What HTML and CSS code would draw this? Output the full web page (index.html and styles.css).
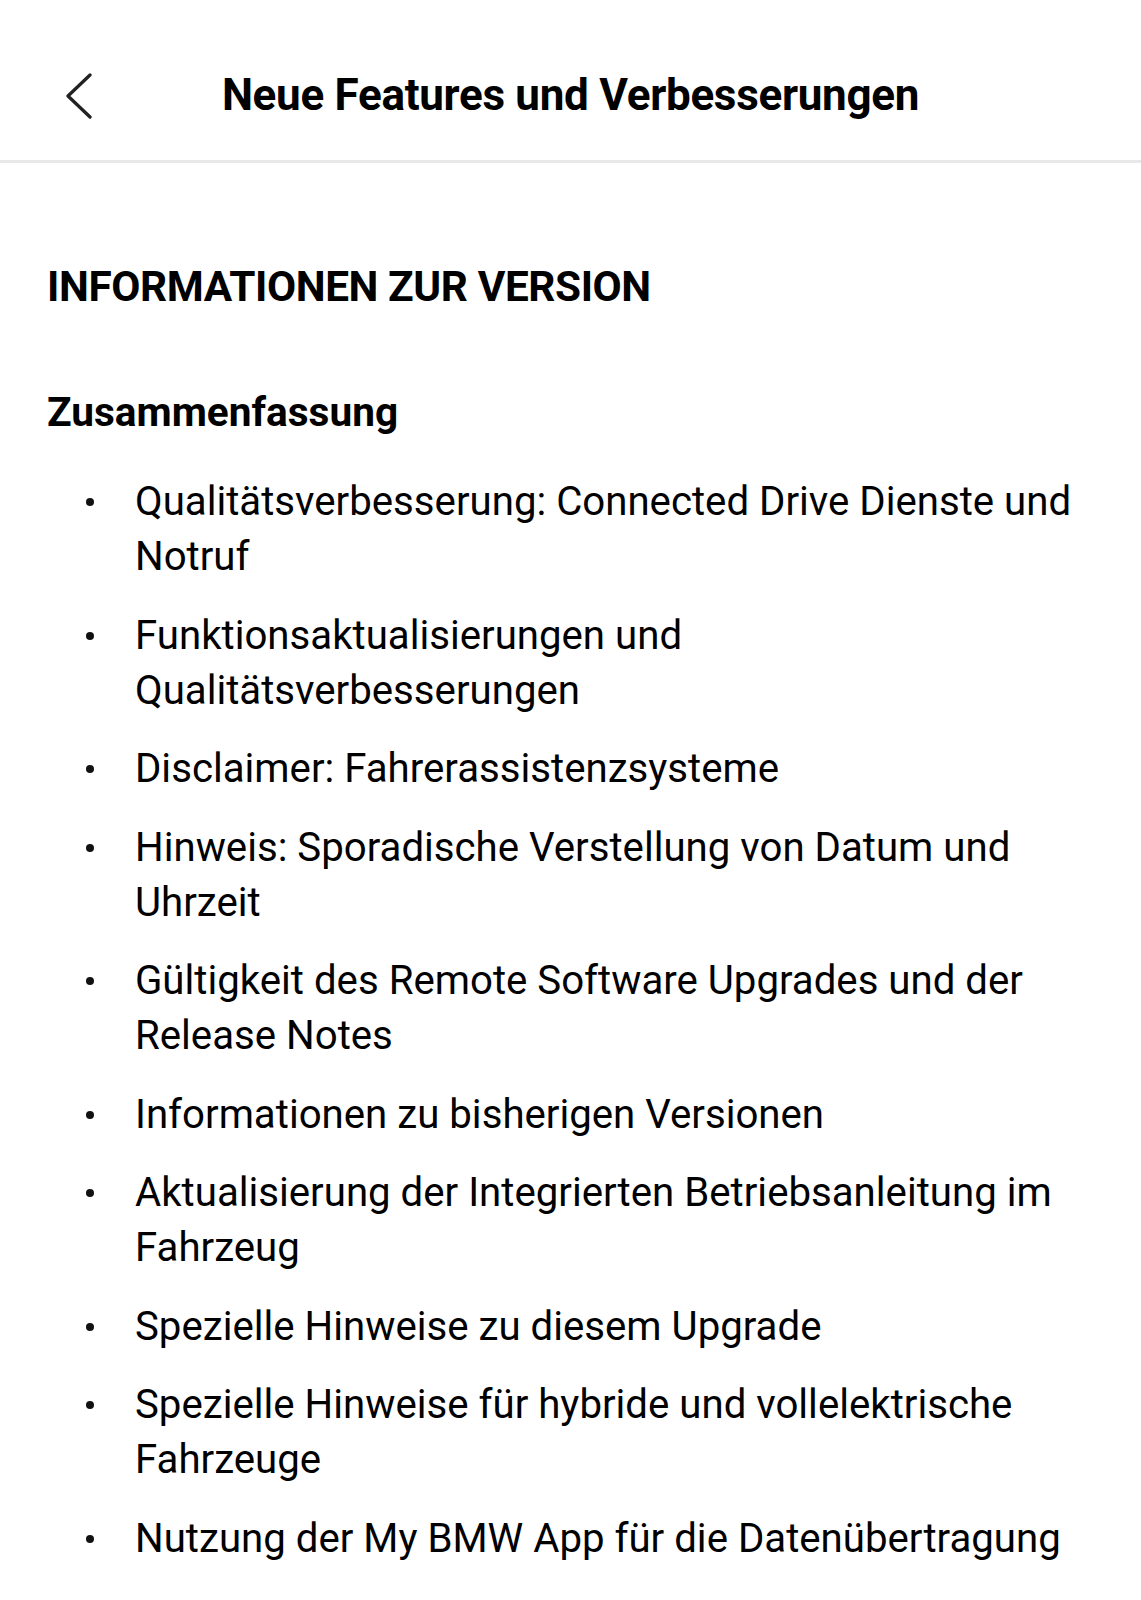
FILE: index.html
```html
<!DOCTYPE html>
<html lang="de">

<head>
    <meta charset="UTF-8">
    <meta name="viewport" content="width=device-width, initial-scale=1.0">
    <title>Neue Features und Verbesserungen</title>
    <link rel="stylesheet" href="styles.css">
</head>

<body>
    <header class="topbar">
        <a class="back" href="#" aria-label="Zurück">
            <svg width="28" height="46" viewBox="0 0 28 46">
                <polyline points="25,2 3,23 25,44" fill="none" stroke="#222" stroke-width="3.3" stroke-linecap="round" stroke-linejoin="round" />
            </svg>
        </a>
        <h1 class="title">Neue Features und Verbesserungen</h1>
        <span></span>
    </header>

    <main class="content">
        <h2 class="section-title">INFORMATIONEN ZUR VERSION</h2>

        <h3 class="summary-title">Zusammenfassung</h3>
        <ul class="summary">
            <li>Qualitätsverbesserung: Connected Drive Dienste und Notruf</li>
            <li>Funktionsaktualisierungen und Qualitätsverbesserungen</li>
            <li>Disclaimer: Fahrerassistenzsysteme</li>
            <li>Hinweis: Sporadische Verstellung von Datum und Uhrzeit</li>
            <li>Gültigkeit des Remote Software Upgrades und der Release Notes</li>
            <li>Informationen zu bisherigen Versionen</li>
            <li>Aktualisierung der Integrierten Betriebsanleitung im Fahrzeug</li>
            <li>Spezielle Hinweise zu diesem Upgrade</li>
            <li>Spezielle Hinweise für hybride und vollelektrische Fahrzeuge</li>
            <li>Nutzung der My BMW App für die Datenübertragung</li>
        </ul>
    </main>
</body>

</html>
```

FILE: styles.css
```css
body {
    font-family: Roboto, "Liberation Sans", sans-serif;
    margin: 0;
    padding: 0;
    background-color: #fff;
    color: #000;
}

.topbar {
    display: grid;
    grid-template-columns: 1fr auto 1fr;
    align-items: center;
    height: 130px;
    padding-top: 30px;
    border-bottom: 3px solid #e8e8e8;
}

.back {
    display: flex;
    padding-left: 65px;
    padding-top: 2px;
}

.title {
    margin: 0;
    font-size: 44px;
    font-weight: 700;
    letter-spacing: -0.3px;
}

.content {
    padding: 0 47px;
}

.section-title {
    margin: 100px 0 0;
    font-size: 42.3px;
    font-weight: 700;
    line-height: 48px;
    letter-spacing: -0.4px;
}

.summary-title {
    margin: 77px 0 0;
    font-size: 40.6px;
    font-weight: 700;
    line-height: 48px;
}

.summary {
    list-style: none;
    margin: 38px 0 0;
    padding: 0 0 0 88px;
    font-size: 40.2px;
    line-height: 55px;
}

.summary li {
    position: relative;
    margin-bottom: 23.5px;
}

/* round bullet in front of each entry */
.summary li::before {
    content: "";
    position: absolute;
    left: -49px;
    top: 24px;
    width: 8px;
    height: 8px;
    border-radius: 50%;
    background-color: #111;
}
```
